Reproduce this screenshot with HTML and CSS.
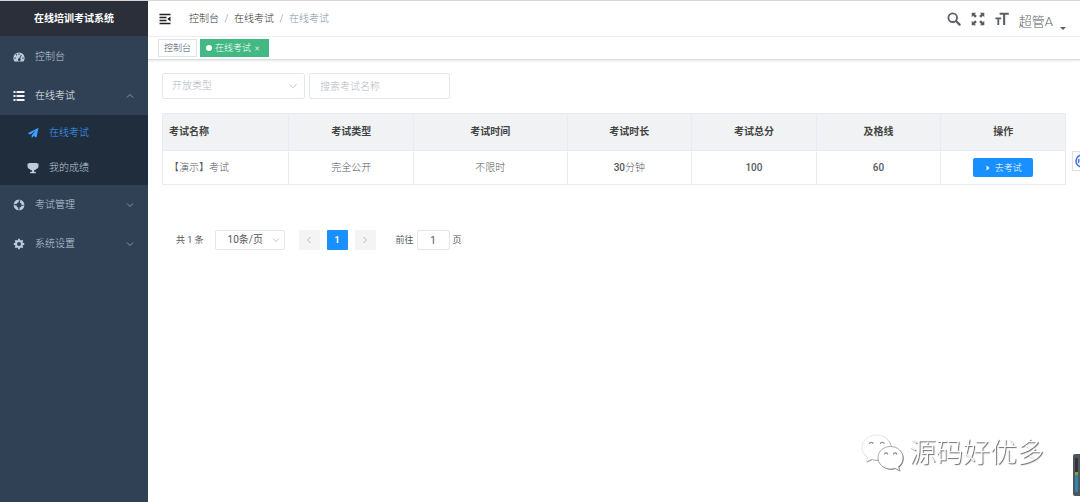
FILE: index.html
```html
<!DOCTYPE html>
<html lang="zh-CN">
<head>
<meta charset="utf-8">
<meta name="viewport" content="width=device-width, initial-scale=1">
<title>在线培训考试系统</title>
<link rel="stylesheet" href="styles.css">
</head>
<body>
<div class="app">
  <aside class="sidebar">
    <h1 class="brand">在线培训考试系统</h1>
    <nav class="menu">
      <a class="menu-item" href="#">
        <svg class="icon" viewBox="0 0 12 12"><path fill="currentColor" fill-rule="evenodd" d="M6 1.4A5.6 5.6 0 0 0 .4 7c0 1.400.4 2.600 1.100 3.600h9c.7-1 1.100-2.200 1.100-3.600A5.600 5.600 0 0 0 6 1.400zM5.400 2.500h1.200v1.300H5.400zM2.700 3.800l.8-.8.9.9-.8.8zM1.400 6.500h1.300v1.200H1.400zM9.300 6.500h1.300v1.200H9.300zM8 3.800l.7.3-1.500 3.500a1.400 1.400 0 1 1-1-.3z"/></svg>
        <span class="menu-text">控制台</span>
      </a>
      <a class="menu-item open" href="#">
        <svg class="icon" viewBox="0 0 12 12"><path fill="currentColor" d="M.5 1h2v2h-2zM3.500 1h8v2h-8zM.5 5h2v2h-2zM3.500 5h8v2h-8zM.5 9h2v2h-2zM3.500 9h8v2h-8z"/></svg>
        <span class="menu-text">在线考试</span>
        <svg class="arrow" viewBox="0 0 8 8"><path d="M1 5.500 4 2.500l3 3"/></svg>
      </a>
      <div class="submenu">
        <a class="menu-item active" href="#">
          <svg class="icon" viewBox="0 0 12 12"><path fill="currentColor" d="M11.500.8.6 6.300l2.900 1.300 5.300-4.300-4.100 5v2.900l1.900-2.100 2.900 1.300z"/></svg>
          <span class="menu-text">在线考试</span>
        </a>
        <a class="menu-item" href="#">
          <svg class="icon" viewBox="0 0 12 12"><path fill="currentColor" d="M2 .9h8v.7h1.500v2.600c0 1.600-.9 2.500-2.200 2.700-.5.7-1.300 1.200-2.300 1.400v1.500h1.800v1.400H3.200V9.800H5V8.300c-1-.2-1.800-.7-2.300-1.400C1.400 6.700.5 5.800.5 4.200V1.600H2z"/></svg>
          <span class="menu-text">我的成绩</span>
        </a>
      </div>
      <a class="menu-item" href="#">
        <svg class="icon" viewBox="0 0 12 12"><circle cx="6" cy="6" r="4" fill="none" stroke="currentColor" stroke-width="2.600" stroke-dasharray="4.680 1.600" stroke-dashoffset="-.8"/><circle cx="6" cy="6" r="4.900" fill="none" stroke="currentColor" stroke-width=".6"/></svg>
        <span class="menu-text">考试管理</span>
        <svg class="arrow" viewBox="0 0 8 8"><path d="m1 2.500 3 3 3-3"/></svg>
      </a>
      <a class="menu-item" href="#">
        <svg class="icon" viewBox="0 0 12 12"><circle cx="6" cy="6" r="3" fill="none" stroke="currentColor" stroke-width="2"/><path stroke="currentColor" stroke-width="1.900" d="M6 .8v1.800M6 9.400v1.800M.8 6h1.800M9.400 6h1.800M2.300 2.300l1.300 1.300M8.400 8.400l1.300 1.300M2.300 9.700l1.300-1.300M8.400 3.600l1.300-1.300"/></svg>
        <span class="menu-text">系统设置</span>
        <svg class="arrow" viewBox="0 0 8 8"><path d="m1 2.500 3 3 3-3"/></svg>
      </a>
    </nav>
  </aside>

  <div class="main">
    <header class="navbar">
      <button class="icon-button fold" type="button" aria-label="收起菜单">
        <svg viewBox="0 0 12 12"><path fill="none" stroke="currentColor" stroke-width="1.300" d="M.5 1.500h11M.5 4.500h7M.5 7.500h7M.5 10.500h11"/><path fill="currentColor" d="M11.500 3.500v5L8.300 6z"/></svg>
      </button>
      <nav class="breadcrumb">
        <a href="#">控制台</a><span class="slash">/</span><a href="#">在线考试</a><span class="slash">/</span><span class="here">在线考试</span>
      </nav>
      <div class="tools">
        <button class="icon-button" type="button" aria-label="搜索">
          <svg viewBox="0 0 14 14"><circle cx="5.700" cy="5.700" r="4.300" fill="none" stroke="currentColor" stroke-width="1.800"/><path stroke="currentColor" stroke-width="2.200" stroke-linecap="round" d="m9.300 9.300 3.300 3.300"/></svg>
        </button>
        <button class="icon-button" type="button" aria-label="全屏">
          <svg viewBox="0 0 14 14"><path fill="currentColor" d="M.7.7h4.500L3.800 2.100l2 2-1.700 1.700-2-2L.7 5.200zM13.300.7v4.500l-1.400-1.400-2 2-1.700-1.700 2-2L8.800.7zM.7 13.300V8.800l1.400 1.400 2-2 1.700 1.700-2 2 1.400 1.400zM13.300 13.300H8.800l1.400-1.400-2-2 1.700-1.700 2 2 1.400-1.400z"/></svg>
        </button>
        <button class="icon-button" type="button" aria-label="字号">
          <svg viewBox="0 0 14 14"><path fill="currentColor" d="M4.600.8h9.200v2h-3.600V13H8.100V2.800H4.600zM.4 5.600h5.800v1.700H4.200V13H2.400V7.300h-2z"/></svg>
        </button>
        <button class="user" type="button">超管A<span class="caret"></span></button>
      </div>
    </header>

    <nav class="tags">
      <a class="tag" href="#">控制台</a>
      <a class="tag current" href="#"><span class="dot"></span>在线考试<span class="close">×</span></a>
    </nav>

    <main class="content">
      <form class="filters">
        <span class="select-box type-select">
          <select aria-label="开放类型"><option>开放类型</option></select>
          <svg class="arrow" viewBox="0 0 8 8"><path d="m.5 2.200 3.500 3.500 3.500-3.500"/></svg>
        </span>
        <input class="search" type="text" aria-label="搜索考试名称" placeholder="搜索考试名称">
      </form>

      <table class="exams">
        <colgroup>
          <col class="col-name"><col class="col-std"><col class="col-time"><col class="col-std"><col class="col-std"><col class="col-std"><col class="col-std">
        </colgroup>
        <thead>
          <tr><th>考试名称</th><th>考试类型</th><th>考试时间</th><th>考试时长</th><th>考试总分</th><th>及格线</th><th>操作</th></tr>
        </thead>
        <tbody>
          <tr>
            <td>【演示】考试</td><td>完全公开</td><td>不限时</td><td><span class="num">30</span>分钟</td><td><span class="num">100</span></td><td><span class="num">60</span></td>
            <td><button class="start" type="button"><svg viewBox="0 0 6 8"><path fill="currentColor" d="m1.500 1.500 3 2.500-3 2.500z"/></svg>去考试</button></td>
          </tr>
        </tbody>
      </table>

      <div class="pagination">
        <span class="total">共 1 条</span>
        <span class="select-box size-select">
          <select aria-label="每页条数"><option>10条/页</option></select>
          <svg class="arrow" viewBox="0 0 8 8"><path d="m1 2.500 3 3 3-3"/></svg>
        </span>
        <div class="pages">
          <button class="page" type="button" disabled aria-label="上一页"><svg class="arrow" viewBox="0 0 8 8"><path d="M5.500 1 2.500 4l3 3"/></svg></button>
          <button class="page selected" type="button">1</button>
          <button class="page" type="button" disabled aria-label="下一页"><svg class="arrow" viewBox="0 0 8 8"><path d="m2.500 1 3 3-3 3"/></svg></button>
        </div>
        <label class="jump">前往<input type="text" value="1">页</label>
      </div>
    </main>
  </div>
</div>

<button class="side-tab" type="button" aria-label="助手">
  <svg viewBox="0 0 14 14"><circle cx="7" cy="7" r="6" fill="#eef2ff" stroke="#4a73e8" stroke-width="1.600"/><path stroke="#4a73e8" stroke-width="1.300" d="M3.700 5v4M5.500 5v4M7.500 5v4"/></svg>
</button>
<div class="meter"><span class="meter-track"></span></div>
<div class="watermark">
  <svg viewBox="0 0 44 38"><g fill="#888" transform="translate(.8 .8)"><path d="M15.500 1C7.500 1 1 6.500 1 13.500c0 4 2.100 7.500 5.600 9.700L5 28l5.500-2.800c1.600.5 3.300.7 5 .7C23.500 25.900 30 20.500 30 13.500S23.500 1 15.500 1z"/></g><path fill="#fff" stroke="#ccc" stroke-width=".5" d="M15.500 1C7.500 1 1 6.500 1 13.500c0 4 2.100 7.500 5.600 9.700L5 28l5.500-2.800c1.600.5 3.300.7 5 .7C23.500 25.900 30 20.500 30 13.500S23.500 1 15.500 1z"/><path fill="#777" transform="translate(.7 .8)" d="M29.500 12.500C22.500 12.500 17 17.500 17 23.700S22.500 35 29.500 35c1.500 0 3-.2 4.300-.7l5 2.500-1.300-4.200c2.900-2 4.500-5.300 4.500-8.900 0-6.200-5.500-11.200-12.500-11.200z"/><path fill="#fff" stroke="#888" stroke-width=".7" d="M29.500 12.500C22.500 12.500 17 17.500 17 23.700S22.500 35 29.500 35c1.500 0 3-.2 4.300-.7l5 2.500-1.300-4.200c2.900-2 4.500-5.300 4.500-8.900 0-6.200-5.500-11.200-12.500-11.200z"/><path fill="none" stroke="#888" stroke-width="1.100" d="M8.500 10a1.800 1.800 0 0 1 3.600 0M19.500 10a1.800 1.800 0 0 1 3.600 0M23.500 20.500a1.600 1.600 0 0 1 3.200 0M32.500 20.500a1.600 1.600 0 0 1 3.200 0"/></svg>
  <span>源码好优多</span>
</div>
</body>
</html>
```
FILE: styles.css
```css
* { box-sizing: border-box; }

body {
  margin: 0;
  background: #fff;
  color: #55585e;
  font: 300 10px/16px Roboto, "Noto Sans CJK SC", sans-serif;
}

a { color: inherit; text-decoration: none; }

button, input, select {
  margin: 0;
  padding: 0;
  border: 0;
  background: none;
  color: inherit;
  font: inherit;
}

svg { display: block; flex: none; }

.app {
  display: flex;
  min-height: 100vh;
  border-top: 1px solid #d6d6d6;
}

/* Sidebar */
.sidebar {
  flex: none;
  width: 148px;
  background: #304156;
  color: #bfcbd9;
}

.brand {
  margin: 0;
  background: #2b2f3a;
  color: #fff;
  font-size: 10px;
  font-weight: 700;
  line-height: 35px;
  text-align: center;
}

.menu { padding-top: 1px; }

.menu-item {
  display: flex;
  align-items: center;
  height: 39px;
  padding: 0 14px 0 13px;
}

.menu-item .icon { width: 12px; height: 12px; margin-right: 10px; }
.menu-text { flex: 1; }

.arrow {
  width: 8px;
  height: 8px;
  fill: none;
  stroke: #909399;
  stroke-width: 1;
}

.open { color: #f4f4f5; }
.submenu { background: #1f2d3d; }
.submenu .menu-item { height: 35px; padding-left: 27px; }
.menu .active { color: #409eff; }

/* Top bar */
.main { flex: 1; min-width: 0; }

.navbar {
  display: flex;
  align-items: center;
  height: 36px;
  padding: 0 14px 0 11px;
  border-bottom: 1px solid #f0f0f0;
}

.icon-button { width: 14px; height: 14px; color: #5a5e66; }
.fold { width: 12px; height: 12px; color: #222; }
.breadcrumb { display: flex; margin-left: 18px; color: #303133; }
.slash { width: 15px; color: #808690; text-align: center; }
.here { color: #8093ad; }

.tools {
  display: flex;
  align-items: center;
  gap: 10px;
  margin-left: auto;
}

.user {
  display: flex;
  align-items: flex-end;
  gap: 7px;
  padding-top: 6px;
  color: #5a5e66;
  font-size: 13px;
}

.caret {
  border: 3px solid transparent;
  border-top-color: #5a5e66;
  border-bottom: 0;
}

.tags {
  display: flex;
  gap: 3px;
  height: 23px;
  padding: 2px 10px;
  border-bottom: 1px solid #d8dce5;
  box-shadow: 0 1px 2px #0000001a;
}

.tag {
  display: flex;
  align-items: center;
  height: 18px;
  padding: 0 5px;
  border: 1px solid #e0e3ea;
  color: #495060;
  font-size: 9px;
}

.current { border-color: #42b983; background: #42b983; color: #fff; }

.dot {
  width: 6px;
  height: 6px;
  margin-right: 3px;
  border-radius: 50%;
  background: #fff;
}

.close { width: 12px; text-align: center; }

/* Content */
.content { padding: 13px 14px; }
.filters { display: flex; gap: 4px; }

.search, .select-box select, .jump input {
  border: 1px solid #e3e6ec;
  border-radius: 2px;
  background: #fff;
}

.select-box { display: flex; align-items: center; position: relative; }

.select-box select {
  width: 100%;
  height: 100%;
  padding: 0 9px;
  appearance: none;
}

.select-box .arrow {
  position: absolute;
  right: 8px;
  stroke: #c0c4cc;
  pointer-events: none;
}

.type-select { width: 143px; height: 26px; color: #b4b8c1; }
.search { width: 141px; height: 26px; padding: 0 10px; }
.search::placeholder { color: #b4b8c1; }

.exams {
  width: 100%;
  margin-top: 14px;
  border: 1px solid #e8ebf3;
  border-collapse: collapse;
  table-layout: fixed;
}

.col-name { width: 14%; }
.col-std { width: 13.8%; }
.col-time { width: 17%; }

.exams th, .exams td {
  height: 34px;
  padding: 0 6px;
  border: 1px solid #e8ebf3;
  text-align: center;
}

.exams th {
  height: 37px;
  background: #f0f2f4;
  color: #444;
  font-weight: 700;
}

.exams th:first-child, .exams td:first-child { text-align: left; }
.num { font-weight: 500; }

.start {
  display: flex;
  align-items: center;
  justify-content: center;
  gap: 4px;
  width: 60px;
  height: 19px;
  margin: 0 auto;
  border-radius: 2px;
  background: #1890ff;
  color: #fff;
  font-size: 9px;
}

.start svg { width: 6px; height: 8px; }

.pagination {
  display: flex;
  align-items: center;
  height: 20px;
  margin: 45px 14px 0;
  font-size: 9px;
}

.total, .jump { font-weight: 400; }

.size-select { width: 70px; height: 20px; margin-left: 11px; font-size: 10px; font-weight: 400; }
.size-select select { padding-left: 12px; }
.size-select .arrow { right: 5px; }
.pages { display: flex; gap: 7px; margin-left: 14px; }

.page {
  display: flex;
  align-items: center;
  justify-content: center;
  width: 21px;
  height: 20px;
  border-radius: 1px;
  background: #f4f4f5;
}

.page .arrow { stroke: #b4b8bf; }
.selected { background: #1890ff; color: #fff; font-weight: 700; }

.jump { display: flex; align-items: center; gap: 3px; margin-left: 20px; }

.jump input {
  width: 33px;
  height: 20px;
  font-size: 10px;
  text-align: center;
}

/* Floating pieces over the page */
.side-tab {
  position: fixed;
  top: 151px;
  right: 0;
  width: 8px;
  height: 20px;
  overflow: hidden;
  border: 1px solid #dcdfe6;
  border-right: 0;
  background: #fff;
}

.side-tab svg { width: 14px; height: 14px; margin-left: 2px; }

.meter {
  position: fixed;
  right: 0;
  bottom: 6px;
  width: 7px;
  height: 42px;
  padding: 4px 2px;
  border-radius: 2px 0 0 2px;
  background: #51565c;
}

.meter-track {
  display: block;
  width: 3px;
  height: 34px;
  background: linear-gradient(#30343b 40%, #8a9a3c 40% 50%, #2c88ad 50%);
}

.watermark {
  position: fixed;
  right: 36px;
  bottom: 29px;
  display: flex;
  align-items: center;
  gap: 4px;
  color: #fff;
  font-size: 27px;
  font-weight: 300;
  line-height: 40px;
  text-shadow: 1px 1px 1px #666;
}

.watermark svg { width: 44px; height: 38px; }
```
